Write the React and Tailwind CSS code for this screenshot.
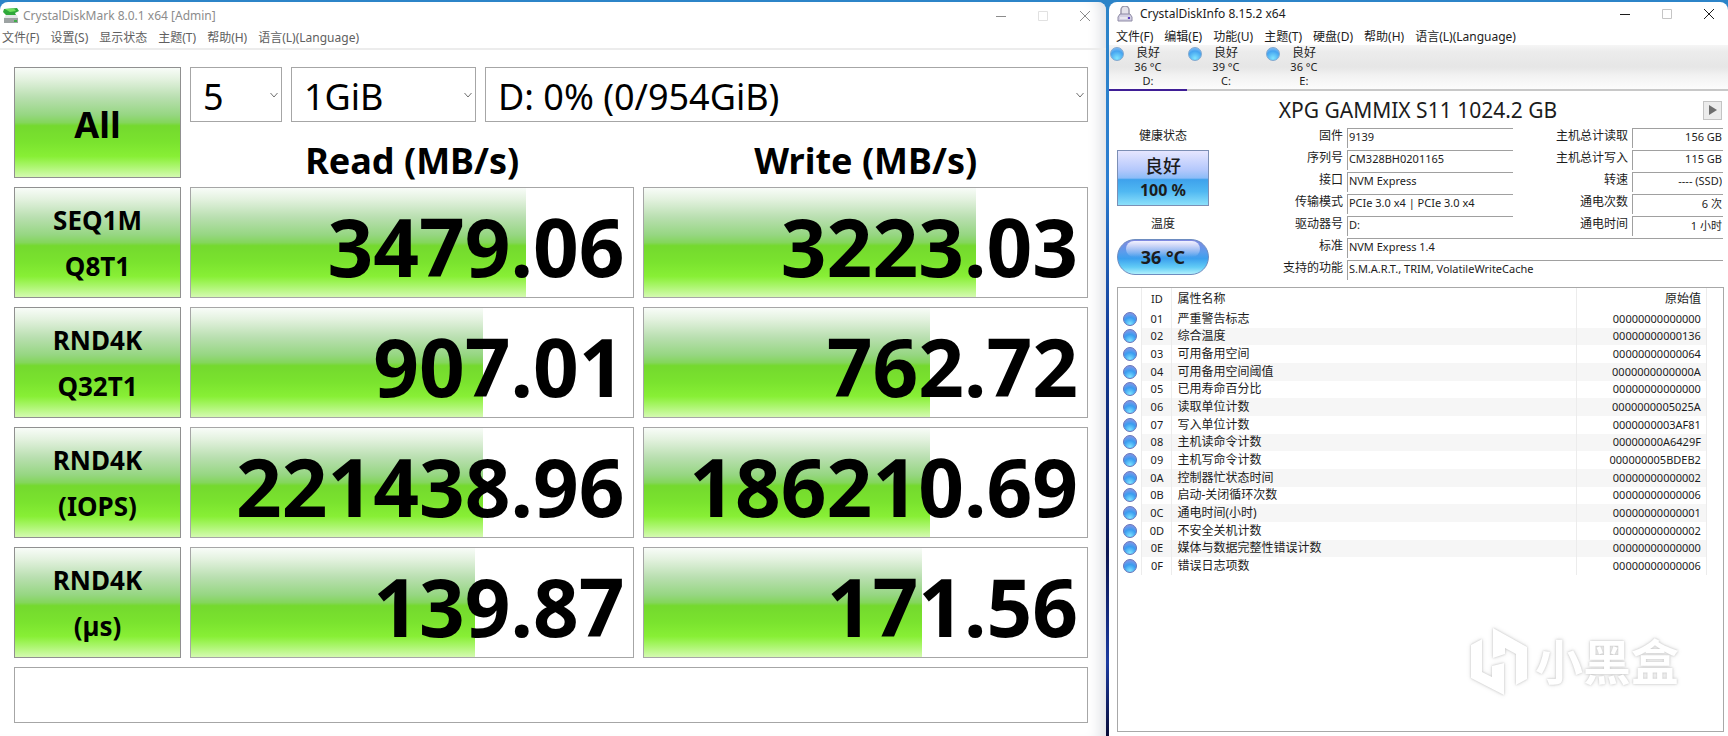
import React from 'react';

const tests = [
  { label: ['SEQ1M', 'Q8T1'], read: '3479.06', readPct: 75.7, write: '3223.03', writePct: 75 },
  { label: ['RND4K', 'Q32T1'], read: '907.01', readPct: 65.9, write: '762.72', writePct: 64.5 },
  { label: ['RND4K', '(IOPS)'], read: '221438.96', readPct: 65.9, write: '186210.69', writePct: 64.5 },
  { label: ['RND4K', '(µs)'], read: '139.87', readPct: 64.2, write: '171.56', writePct: 62.7 },
];

const markMenu = ['文件(F)', '设置(S)', '显示状态', '主题(T)', '帮助(H)', '语言(L)(Language)'];
const infoMenu = ['文件(F)', '编辑(E)', '功能(U)', '主题(T)', '硬盘(D)', '帮助(H)', '语言(L)(Language)'];

const disks = [
  { letter: 'D:', temp: '36 °C', active: true },
  { letter: 'C:', temp: '39 °C' },
  { letter: 'E:', temp: '36 °C' },
];

const leftFields = [
  ['firmware', '固件', '9139'],
  ['serial', '序列号', 'CM328BH0201165'],
  ['interface', '接口', 'NVM Express'],
  ['transfer', '传输模式', 'PCIe 3.0 x4 | PCIe 3.0 x4'],
  ['drive', '驱动器号', 'D:'],
];

const rightFields = [
  ['reads', '主机总计读取', '156 GB'],
  ['writes', '主机总计写入', '115 GB'],
  ['rotation', '转速', '---- (SSD)'],
  ['count', '通电次数', '6 次'],
  ['hours', '通电时间', '1 小时'],
];

const wideFields = [
  ['standard', '标准', 'NVM Express 1.4'],
  ['features', '支持的功能', 'S.M.A.R.T., TRIM, VolatileWriteCache'],
];

const attributes = [
  ['01', '严重警告标志', '00000000000000'],
  ['02', '综合温度', '00000000000136'],
  ['03', '可用备用空间', '00000000000064'],
  ['04', '可用备用空间阈值', '0000000000000A'],
  ['05', '已用寿命百分比', '00000000000000'],
  ['06', '读取单位计数', '0000000005025A'],
  ['07', '写入单位计数', '0000000003AF81'],
  ['08', '主机读命令计数', '00000000A6429F'],
  ['09', '主机写命令计数', '000000005BDEB2'],
  ['0A', '控制器忙状态时间', '00000000000002'],
  ['0B', '启动-关闭循环次数', '00000000000006'],
  ['0C', '通电时间(小时)', '00000000000001'],
  ['0D', '不安全关机计数', '00000000000002'],
  ['0E', '媒体与数据完整性错误计数', '00000000000000'],
  ['0F', '错误日志项数', '00000000000006'],
];

const WindowButtons = () => (
  <div className="ml-auto flex items-center gap-8">
    <button aria-label="Minimize" className="w-[10px] h-[10px]">
      <svg viewBox="0 0 10 10" className="w-full h-full" stroke="currentColor"><path d="M0 5.5h10" /></svg>
    </button>
    <button aria-label="Maximize" disabled className="w-[10px] h-[10px] opacity-25">
      <svg viewBox="0 0 10 10" className="w-full h-full" fill="none" stroke="currentColor"><path d="M.5.5h9v9h-9z" /></svg>
    </button>
    <button aria-label="Close" className="w-[10px] h-[10px]">
      <svg viewBox="0 0 10 10" className="w-full h-full" stroke="currentColor"><path d="M0 0l10 10M10 0L0 10" /></svg>
    </button>
  </div>
);

const MarkSelect = ({ label, value, className }) => (
  <div className={`relative h-[55px] ${className}`}>
    <select
      aria-label={label}
      defaultValue={value}
      className="w-full h-full appearance-none bg-white border border-[#a6a6a6] pl-3 pt-1 text-[36px] leading-[48px] text-black"
    >
      <option>{value}</option>
    </select>
    <svg
      viewBox="0 0 8 6"
      className="absolute right-1 top-[25px] w-2 h-1.5 pointer-events-none"
      fill="none"
      stroke="#707070"
    >
      <path d="M.5 1L4 5l3.500-4" />
    </svg>
  </div>
);

const greenFill =
  'bg-[linear-gradient(180deg,#f8fcf8_0%,#e4f2e0_10%,#b9dfb0_27%,#96d682_43%,#84d65c_50%,#74d92e_53%,#7ae32e_68%,#88ef35_81%,#a6f566_89%,#d4fab0_100%)]';

const Result = ({ value, pct }) => (
  <div className="relative h-[111px] border border-[#a6a6a6] bg-white">
    <div className={`h-full ${greenFill}`} style={{ width: `${pct}%` }} />
    <span className="absolute inset-0 pr-[9px] text-right text-[80px] leading-[116px] font-bold">{value}</span>
  </div>
);

const DiskMark = () => (
  <section className="w-[64%] flex flex-col bg-white rounded-t-lg text-black shadow-[inset_-16px_0_14px_-10px_#dfe1e6]">
    <header className="h-[27px] flex items-center pl-[3px] pr-4 text-xs text-[#8c8c8c]">
      <svg viewBox="0 0 16 16" className="w-4 h-4 mr-1">
        <path d="M1 1l13-1 2 3-4 2 1 2H3L0 4z" fill="#2fa83a" />
        <path d="M2 1l9-.5L13 3 7 4z" fill="#6fe05c" />
        <path d="M3 7h11l1 3H1z" fill="#e3e6e6" />
        <path d="M1 10h14v5H1z" fill="#9da3a3" />
        <path d="M11 12h3v2h-3z" fill="#3fae49" />
      </svg>
      CrystalDiskMark 8.0.1 x64 [Admin]
      <WindowButtons />
    </header>
    <nav className="h-[21px] flex items-center gap-[11px] pl-[2px] pb-px border-b-2 border-[#ececec] text-xs text-[#606060]">
      {markMenu.map(item => (
        <button key={item}>{item}</button>
      ))}
    </nav>

    <div className="grid grid-cols-[167px_1fr_1fr] gap-[9px] pt-[17px] pl-[14px] pr-[18px]">
      <button className={`h-[111px] border border-[#909090] pt-1 text-[36px] font-bold ${greenFill}`}>All</button>
      <div className="col-span-2 flex flex-col">
        <div className="flex gap-[9px]">
          <MarkSelect label="Test count" value="5" className="w-[92px]" />
          <MarkSelect label="Test size" value="1GiB" className="w-[185px]" />
          <MarkSelect label="Drive" value="D: 0% (0/954GiB)" className="flex-1" />
        </div>
        <div className="grid grid-cols-2 gap-[9px] pt-3 text-[36px] leading-[54px] h-14 font-bold text-center">
          <h2>Read (MB/s)</h2>
          <h2>Write (MB/s)</h2>
        </div>
      </div>

      {tests.map(test => (
        <React.Fragment key={test.label.join()}>
          <button className={`h-[111px] border border-[#909090] pt-px text-[26px] leading-[46px] font-bold ${greenFill}`}>
            {test.label[0]}
            <br />
            {test.label[1]}
          </button>
          <Result value={test.read} pct={test.readPct} />
          <Result value={test.write} pct={test.writePct} />
        </React.Fragment>
      ))}

      <input aria-label="Comment" className="col-span-3 h-14 border border-[#a6a6a6] bg-white px-3 text-2xl" />
    </div>
  </section>
);

const Field = ({ id, label, value, boxClass }) => (
  <div className="flex items-center h-5">
    <label htmlFor={id} className="flex-1 pr-1 pb-1 text-right whitespace-nowrap">{label}</label>
    <input
      id={id}
      readOnly
      value={value}
      className={`h-5 border-t border-l border-[#a0a0a0] bg-white px-px pb-1 text-[11px] ${boxClass}`}
    />
  </div>
);

const Watermark = () => (
  <div className="absolute right-[49px] bottom-10 flex items-center gap-2 text-white pointer-events-none [filter:drop-shadow(0_0_1px_#c4c4c4)_drop-shadow(0_0_2px_#e6e6e6)]">
    <svg viewBox="0 0 56 68" className="w-14 h-[68px]" fill="currentColor">
      <path d="M0 17l11-6v33l10 5V38l12-3v32L0 50z" />
      <path d="M22 0l34 19v32l-11 6V26l-11-6v6l-12 4z" />
    </svg>
    <span className="text-[48px] leading-[60px] font-bold">小黑盒</span>
  </div>
);

const DiskInfo = () => (
  <section className="relative flex-1 flex flex-col bg-white rounded-t-lg text-xs text-[#1c1c1c]">
    <header className="h-[24px] flex items-center pl-2 pr-[14px]">
      <svg viewBox="0 0 16 16" className="w-4 h-4 mr-[7px]">
        <path d="M4 9V4a4 4 0 018 0v5" fill="#e4e2ea" stroke="#9c99ac" strokeWidth="1.500" />
        <path d="M3 8h10l2 3v4H1v-4z" fill="#d2cfe2" stroke="#8f8ba6" />
        <path d="M3 12h7" stroke="#fff" />
        <path d="M11 11h2v2h-2z" fill="#5a3fc0" />
      </svg>
      CrystalDiskInfo 8.15.2 x64
      <WindowButtons />
    </header>
    <nav className="h-[19px] flex items-center gap-[11px] pl-[7px] pt-0.5">
      {infoMenu.map(item => (
        <button key={item}>{item}</button>
      ))}
    </nav>

    <div className="flex h-[46px] border-b-2 border-[#c8c8c8] bg-[linear-gradient(180deg,#f6f6f6_0%,#ececec_15%,#e6e6e6_50%,#f2f2f2_70%,#fcfcfc_100%)]">
      {disks.map(disk => (
        <button
          key={disk.letter}
          className={`relative w-[78px] h-[46px] border-b-2 leading-[14px] ${disk.active ? 'border-[#3f1e96]' : 'border-[#c8c8c8]'}`}
        >
          <span className="absolute left-px top-[2px] w-[14px] h-[14px] rounded-full border border-[#7fa8d0] bg-[radial-gradient(circle_at_50%_85%,#7fe4ff,#45a4f0_60%,#9cc4f5)]" />
          <span className="block">良好</span>
          <span className="block text-[11px] leading-[14px]">{disk.temp}</span>
          <span className="block text-[11px] leading-[14px]">{disk.letter}</span>
        </button>
      ))}
    </div>

    <div className="flex items-center pl-[24px] pr-[6px] pt-[5px]">
      <h1 className="flex-1 text-center text-[21px] leading-[28px]">XPG GAMMIX S11 1024.2 GB</h1>
      <button aria-label="Next disk" className="w-[19px] h-[19px] flex items-center justify-center border border-[#c4c4c4] bg-[#ececec]">
        <svg viewBox="0 0 8 10" className="w-2 h-2.5"><path d="M0 0l8 5-8 5z" fill="#6e6e6e" /></svg>
      </button>
    </div>

    <div className="flex pl-2 pr-[5px] pt-1">
      <div className="w-[92px] flex flex-col text-center leading-[16px]">
        <span>健康状态</span>
        <button className="mt-[6px] h-[56px] flex flex-col items-center justify-center border border-[#7c8fb5] bg-[linear-gradient(180deg,#e6e6ff_0%,#b4c8fc_35%,#8cbcf8_50%,#3ea2ec_53%,#50b8f2_75%,#8ce0fa_100%)]">
          <span className="text-[18px] leading-[24px] font-medium">良好</span>
          <span className="text-base leading-[24px] font-bold">100 %</span>
        </button>
        <span className="mt-[10px]">温度</span>
        <button className="relative mt-[7px] h-9 rounded-full border border-[#6d8cc0] text-lg font-bold bg-[linear-gradient(180deg,#8088e0_0%,#5c9cec_35%,#3ca0ee_55%,#62ccf6_80%,#b0f0fc_100%)]">
          <span className="absolute left-2 right-2 top-px h-4 rounded-full bg-[linear-gradient(180deg,#f2f2ff,#8cb4f400)]" />
          <span className="relative">36 °C</span>
        </button>
      </div>

      <div className="flex-1 flex flex-col gap-[2px]">
        <div className="flex justify-between">
          <div className="w-[304px] flex flex-col gap-[2px]">
            {leftFields.map(([id, label, value]) => (
              <Field key={id} id={id} label={label} value={value} boxClass="w-[166px]" />
            ))}
          </div>
          <div className="w-[180px] flex flex-col gap-[2px]">
            {rightFields.map(([id, label, value]) => (
              <Field key={id} id={id} label={label} value={value} boxClass="w-[91px] text-right" />
            ))}
          </div>
        </div>
        {wideFields.map(([id, label, value]) => (
          <div key={id} className="flex items-center h-5">
            <label htmlFor={id} className="w-[138px] pr-1 pb-1 text-right">{label}</label>
            <input
              id={id}
              readOnly
              value={value}
              className="flex-1 h-5 border-t border-l border-[#a0a0a0] bg-white px-px pb-1 text-[11px]"
            />
          </div>
        ))}
      </div>
    </div>

    <div className="flex-1 mt-[7px] ml-2 mr-1 mb-1 border border-[#a8a8a8]">
      <table className="w-[589px] h-[287px] border-collapse leading-[16px]">
        <thead>
          <tr className="h-[22px]">
            <th className="w-[24px] border-r border-[#ececec]"></th>
            <th className="w-[30px] border-r border-[#ececec] font-normal text-[11px]">ID</th>
            <th className="border-r border-[#ececec] pl-[5px] text-left font-normal">属性名称</th>
            <th className="w-[130px] border-r border-[#ececec] pr-[5px] text-right font-normal">原始值</th>
          </tr>
        </thead>
        <tbody>
          {attributes.map(([id, name, raw]) => (
            <tr key={id} className="even:bg-[#f6f6f6]">
              <td className="border-r border-[#ececec] bg-white">
                <span className="block mx-auto w-[14px] h-[14px] rounded-full border border-[#6a74b8] bg-[radial-gradient(circle_at_50%_90%,#7fe4ff,#3a9cf0_50%,#9a94e4)]" />
              </td>
              <td className="border-r border-[#ececec] text-center text-[11px]">{id}</td>
              <td className="border-r border-[#ececec] pl-[5px]">{name}</td>
              <td className="border-r border-[#ececec] pr-[5px] text-right text-[11px]">{raw}</td>
            </tr>
          ))}
        </tbody>
      </table>
    </div>
    <Watermark />
  </section>
);

const App = () => (
  <main className="min-h-screen flex items-stretch gap-[3px] pt-0.5 bg-[linear-gradient(180deg,#2c84c8_0%,#2a7cd0_25%,#123c98_45%,#0a1450_75%,#1a3aa0_90%,#080c38_100%)] font-['Noto_Sans','Noto_Sans_CJK_SC',sans-serif]">
    <DiskMark />
    <DiskInfo />
  </main>
);

export default App;
